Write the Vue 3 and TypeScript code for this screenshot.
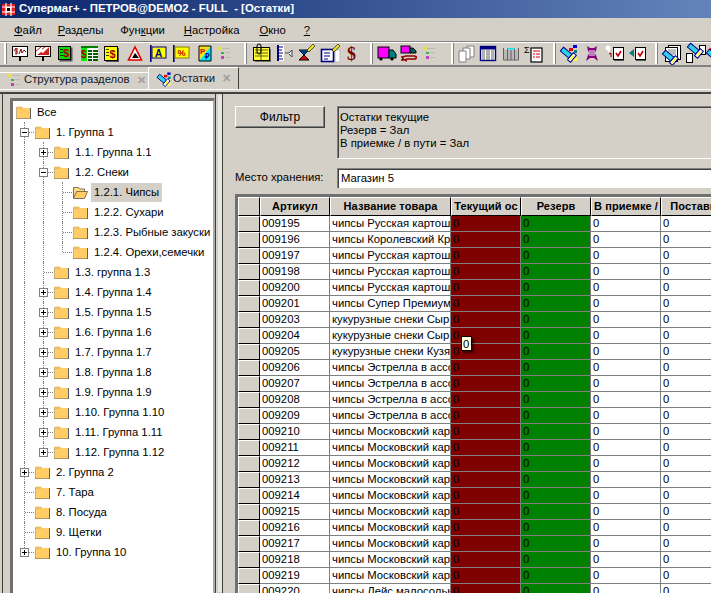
<script setup lang="ts">
type Cell = 'v' | 't' | 'l' | 'n'
interface TreeRow { cells: Cell[]; text: string; exp?: '+' | '-'; open?: boolean }

const menu = [
  { pre: '', u: 'Ф', post: 'айл' },
  { pre: '', u: 'Р', post: 'азделы' },
  { pre: 'Фун', u: 'к', post: 'ции' },
  { pre: '', u: 'Н', post: 'астройка' },
  { pre: '', u: 'О', post: 'кно' },
  { pre: '', u: '?', post: '' },
]

const B = 'stroke="#000" stroke-width="1"'
const legend = `<rect x="2" y="5" width="4" height="3" fill="#e8e040"/><rect x="6" y="6" width="8" height="1" fill="#b8b8b8"/><rect x="5" y="10" width="3" height="2" fill="#40b040"/><rect x="9" y="10" width="5" height="1" fill="#b8b8b8"/><rect x="5" y="14" width="3" height="3" fill="#c040c0"/><rect x="9" y="15" width="5" height="1" fill="#b8b8b8"/>`
const torch = (x: number, y: number) => `<g transform="translate(${x} ${y}) rotate(40 7 6)"><rect x="0" y="3" width="11" height="5" fill="#30d0e8" stroke="#000080"/><rect x="11" y="1" width="4" height="9" fill="#fff" stroke="#000080"/><rect x="12" y="3" width="2" height="5" fill="#ffff40"/></g>`
const chk = (x: number) => `<rect x="${x + 1}" y="7" width="10" height="12" fill="#555"/><rect x="${x}.5" y="5.5" width="10" height="12" fill="#fff" stroke="#000"/><path d="M${x + 3} 11l2 3 3-5" fill="none" stroke="#c00000" stroke-width="1.6"/>`
const pen = (x: number, y: number) => `<path d="M${x} ${y + 6}l6-6 2 2-6 6z" fill="#e8e020" stroke="#000" stroke-width=".6"/>`

const groups: { cls: string; icons: string[] }[] = [
  {
    cls: 'g1', icons: [
      `<rect x="3.5" y="4.5" width="15" height="10" fill="#fff" ${B}/><rect x="10" y="15" width="2" height="4" fill="#000"/><path d="M5 9l2-3v7M8 6v6M10 12l2-5 1 4 2-3 2 2" fill="none" stroke="#900000"/>`,
      `<rect x="3.5" y="4.5" width="15" height="10" fill="#fff" ${B}/><rect x="10" y="15" width="2" height="4" fill="#000"/><path d="M5 13l4-3 2 1 6-6v8H5z" fill="#d02020"/><path d="M4 9l5-4M10 7l3-2" stroke="#b02020"/>`,
      `<rect x="4.5" y="5.5" width="13" height="14" fill="#555"/><rect x="3.5" y="4.5" width="12" height="13" fill="#00e000" ${B}/><rect x="5" y="7" width="3" height="1" fill="#004000"/><rect x="5" y="10" width="3" height="1" fill="#004000"/><rect x="5" y="13" width="3" height="1" fill="#004000"/><text x="8" y="15" font-size="11" font-weight="700" fill="#a00000" font-family="Liberation Sans">$</text>`,
      `<rect x="3" y="4" width="17" height="15" fill="#fff"/><rect x="3" y="4" width="17" height="2" fill="#008000"/><rect x="3" y="6" width="6" height="13" fill="#00f000"/><path d="M10 8h4v2h-4zM15 8h5v2h-5zM10 11h4v2h-4zM15 11h5v2h-5zM10 14h4v2h-4zM15 14h5v2h-5zM10 17h4v2h-4zM15 17h5v2h-5z" fill="#006000"/><text x="3" y="16" font-size="10" font-weight="700" fill="#a00000" font-family="Liberation Sans">$</text>`,
      `<rect x="5" y="6" width="13" height="14" fill="#555"/><rect x="3.5" y="4.5" width="13" height="14" fill="#ffff00" ${B}/><rect x="5" y="7" width="3" height="1" fill="#404000"/><rect x="5" y="10" width="3" height="1" fill="#404000"/><rect x="5" y="13" width="3" height="1" fill="#404000"/><text x="8.5" y="16" font-size="11" font-weight="700" fill="#a00000" font-family="Liberation Sans">$</text>`,
      `<path d="M11 5L4.500 18h13z" fill="#fff" stroke="#e00000" stroke-width="1.6"/><path d="M8 16l3-5 4 5z" fill="#000"/>`,
      `<rect x="3" y="3" width="1.6" height="17" fill="#000080"/><rect x="5" y="5" width="14" height="11" fill="#ffff00" stroke="#000080"/><text x="8" y="14.500" font-size="10" font-weight="700" fill="#000080" font-family="Liberation Sans">A</text>`,
      `<rect x="3" y="3" width="1.6" height="17" fill="#000080"/><rect x="5" y="5" width="14" height="11" fill="#ffff00" stroke="#808000"/><text x="7.500" y="14" font-size="9" font-weight="700" fill="#c00000" font-family="Liberation Sans">%</text>`,
      `<path d="M6 4h12v15H6z" fill="#00e8ff"/><path d="M6 4h12L6 19z" fill="#ffe020"/><path d="M6 4h12v15H6z" fill="none" stroke="#000"/><text x="7" y="12" font-size="8" fill="#c00000" font-weight="700" font-family="Liberation Sans">Р</text><text x="12" y="17" font-size="8" fill="#000080" font-weight="700" font-family="Liberation Sans">₽</text>`,
      legend,
    ],
  },
  {
    cls: 'g2', icons: [
      `<rect x="6" y="7" width="16" height="13" fill="#555" opacity=".8"/><rect x="4.500" y="5.500" width="16" height="13" fill="#ffff40" ${B}/><path d="M6 8h13M6 11h13M6 14h13M12 6v12" stroke="#606000"/><rect x="8" y="2" width="4" height="10" rx="2" fill="none" stroke="#000"/>`,
      `<rect x="5" y="3" width="2" height="16" fill="#000080"/><rect x="7" y="3" width="5" height="16" fill="#fff"/><path d="M7 5h4M7 8h3M7 11h4M7 14h3M7 17h4" stroke="#000080"/><path d="M13 11h4l3-3v7l-3-3" fill="#fff" stroke="#404040"/>`,
      `<path d="M4 8h10L9 13l5 5H4l5-5z" fill="#e00000" stroke="#000"/><path d="M4 8h10L9 13z" fill="#004080"/>${pen(12, 2)}`,
      `<rect x="17" y="8" width="5" height="12" fill="#fff" stroke="#bbb"/><rect x="3.500" y="7.500" width="12" height="12" fill="#fff" stroke="#000080" stroke-width="1.6"/><path d="M6 11h6M6 14h6M6 17h4" stroke="#000080"/>${pen(14, 2)}`,
      `<text x="6" y="18" font-size="18" font-weight="700" fill="#800000" font-family="Liberation Serif">$</text>`,
    ],
  },
  {
    cls: 'g3', icons: [
      `<rect x="3" y="5" width="11" height="11" fill="#ff00ff" stroke="#000"/><path d="M14 8h4l3 4v4h-7z" fill="#008080" stroke="#000"/><circle cx="6" cy="17" r="1.6" fill="#000"/><circle cx="17" cy="17" r="1.6" fill="#000"/>`,
      `<rect x="3" y="4" width="9" height="7" fill="#ff00ff" stroke="#000"/><path d="M12 6h3l3 3v2h-6z" fill="#006060" stroke="#000"/><path d="M3 18h3l-2-3 4-1h8c3 0 3 3 0 3H9c-2 0-2 2 0 2" fill="none" stroke="#900000" stroke-width="1.6"/>`,
      legend,
    ],
  },
  {
    cls: 'g4', icons: [
      `<path d="M13 4h7v11h-7z" fill="#fff" stroke="#808080"/><path d="M9 6h7v11H9z" fill="#fff" stroke="#808080"/><path d="M5 9h7v11H5z" fill="#fff" stroke="#808080"/>`,
      `<rect x="3.500" y="4.500" width="15" height="14" fill="#fff" stroke="#000080" stroke-width="1.400"/><rect x="4" y="5" width="14" height="2.500" fill="#000080"/><path d="M5 9h3M9 9h4M14 9h3M5 11h3M9 11h4M14 11h3M5 13h3M9 13h4M14 13h3M5 15h3M9 15h4M14 15h3M5 17h3M9 17h4M14 17h3" stroke="#606060"/>`,
      `<rect x="3" y="8" width="16" height="9" fill="#b8b8b8"/><rect x="7" y="6" width="8" height="1.400" fill="#00e8ff"/><path d="M3.500 6v12h15V6M7.500 7v11M11 8v10M14.500 7v11" fill="none" stroke="#606060"/>`,
      `<text x="1" y="11" font-size="9" fill="#000" font-family="Liberation Sans">Σ</text><rect x="8" y="6" width="11" height="14" fill="#fff" stroke="#000" stroke-width="1.200"/><path d="M10 9h7M10 12h2M13 12h4M10 15h2M13 15h4" stroke="#e00000"/>`,
    ],
  },
  {
    cls: 'g5', icons: [
      `<path d="M13 19l6-4v4z" fill="#ffff40"/>${torch(2, 6)}<rect x="11" y="6" width="4" height="3" fill="#e00000"/><rect x="15" y="3" width="4" height="3" fill="#0000e0"/><rect x="16" y="8" width="3" height="3" fill="#008080"/>`,
      `<path d="M6 4l3 2h4l3-2-1 5-2 2 2 2 2 6-4-3h-4l-4 3 2-6 2-2-2-2z" fill="#800080"/><rect x="8" y="8" width="6" height="6" fill="#c080c0"/>`,
      `<circle cx="4" cy="6" r="2.500" fill="#fff"/><circle cx="5" cy="9" r="1.200" fill="#fff"/>${chk(9)}<path d="M5 12l2-1v4" stroke="#800000" fill="none"/>`,
      `<path d="M7 7v8l-5-4z" fill="#008080"/>${chk(8)}`,
    ],
  },
  {
    cls: 'g6', icons: [
      `<rect x="8.500" y="3.500" width="12" height="14" fill="#fff" stroke="#000"/><rect x="5.500" y="5.500" width="12" height="14" fill="#fff" stroke="#000"/><path d="M8 8h8M8 10h8M8 12h8" stroke="#808080"/>${torch(2, 9)}`,
      `<rect x="16.500" y="3.500" width="6" height="9" fill="#fff" stroke="#000"/><rect x="3.500" y="11.500" width="6" height="9" fill="#fff" stroke="#000"/>${torch(4, 2)}`,
      `<path d="M2 8l5-4 5 4z" fill="#e00000"/>${torch(0, 8)}`,
    ],
  },
]

const row = (cells: Cell[], text: string, exp?: '+' | '-', open?: boolean): TreeRow => ({ cells, text, exp, open })
const tree: TreeRow[] = [
  row([], 'Все'),
  row(['t'], '1. Группа 1', '-'),
  row(['v', 't'], '1.1. Группа 1.1', '+'),
  row(['v', 't'], '1.2. Снеки', '-'),
  row(['v', 'v', 't'], '1.2.1. Чипсы', undefined, true),
  row(['v', 'v', 't'], '1.2.2. Сухари'),
  row(['v', 'v', 't'], '1.2.3. Рыбные закуски'),
  row(['v', 'v', 'l'], '1.2.4. Орехи,семечки'),
  row(['v', 't'], '1.3. группа 1.3'),
  ...[4, 5, 6, 7, 8, 9, 10, 11].map(n => row(['v', 't'], `1.${n}. Группа 1.${n}`, '+')),
  row(['v', 'l'], '1.12. Группа 1.12', '+'),
  row(['t'], '2. Группа 2', '+'),
  row(['t'], '7. Тара'),
  row(['t'], '8. Посуда'),
  row(['t'], '9. Щетки'),
  row(['l'], '10. Группа 10', '+'),
]

const R = 'чипсы Русская картошка'
const E = 'чипсы Эстрелла в ассорти'
const M = 'чипсы Московский картофель'
const goods: [string, string][] = [
  ['009195', R], ['009196', 'чипсы Королевский Краб'], ['009197', R], ['009198', R], ['009200', R],
  ['009201', 'чипсы Супер Премиум'], ['009203', 'кукурузные снеки Сыр'], ['009204', 'кукурузные снеки Сыр'],
  ['009205', 'кукурузные снеки Кузя'], ['009206', E], ['009207', E], ['009208', E], ['009209', E],
  ['009210', M], ['009211', M], ['009212', M], ['009213', M], ['009214', M], ['009215', M], ['009216', M],
  ['009217', M], ['009218', M], ['009219', M], ['009220', 'чипсы Лейс малосольные'],
]
const headers = ['Артикул', 'Название товара', 'Текущий ос', 'Резерв', 'В приемке /', 'Поставка']
</script>

<template>
  <div class="app">
    <div class="title">
      <svg class="logo" width="15" height="15" viewBox="0 0 15 15">
        <rect x="1" y="2" width="13" height="11" fill="#e02020" />
        <path d="M1 5h13M1 10h13M5 1v13M10 1v13" stroke="#fff" stroke-width="1.2" fill="none" />
        <rect x="5.500" y="5.500" width="4" height="4" fill="#000" stroke="#fff" />
      </svg>
      <span>Супермаг+ - ПЕТРОВ@DEMO2 - FULL&nbsp; - [Остатки]</span>
    </div>

    <div class="menu">
      <span v-for="m in menu" :key="m.u" class="menu-item">{{ m.pre }}<u>{{ m.u }}</u>{{ m.post }}</span>
    </div>

    <div class="toolbar">
      <template v-for="g in groups" :key="g.cls">
        <i class="grip" :class="g.cls"></i>
        <svg v-for="(ic, n) in g.icons" :key="n" class="tool" width="23" height="23" viewBox="0 0 23 23" v-html="ic"></svg>
      </template>
    </div>

    <div class="tabs">
      <div class="tab">
        <svg width="16" height="16" viewBox="0 3 16 16" class="tab-ic" v-html="legend"></svg>
        <span class="tab-text">Структура разделов</span>
        <span class="tab-x">✕</span>
      </div>
      <div class="tab active">
        <svg width="18" height="18" viewBox="0 0 22 22" class="tab-ic" v-html="groups[4].icons[0]"></svg>
        <span class="tab-text">Остатки</span>
        <span class="tab-x">✕</span>
      </div>
    </div>

    <div class="main">
      <aside class="side">
        <div class="tree">
          <div v-for="r in tree" :key="r.text" class="node">
            <span v-for="(c, i) in r.cells" :key="i" class="guide" :class="c">
              <b v-if="i === r.cells.length - 1 && r.exp" class="exp" :class="{ minus: r.exp === '-' }"></b>
            </span>
            <svg class="folder" :class="{ root: !r.cells.length }" width="15" height="13" viewBox="0 0 15 13">
              <template v-if="r.open">
                <path d="M.5 12.500V1.500h5l1 1.500h5v2" fill="#ffdd88" stroke="#807050" />
                <path d="M.5 12.500l3-7h11l-3 7z" fill="#ffcc66" stroke="#807050" />
              </template>
              <template v-else>
                <path d="M0 1.500L1 .5h5l1 1.500h7v11H0z" fill="#ffcc66" />
                <path d="M0 2h6.500" stroke="#c8b080" fill="none" />
                <path d="M.5 12.500v-10.500" stroke="#c8b080" fill="none" />
                <path d="M14.500 2v11H0" stroke="#606060" fill="none" />
              </template>
            </svg>
            <span class="label" :class="{ sel: r.open }">{{ r.text }}</span>
          </div>
        </div>
      </aside>

      <section class="content">
        <div class="top">
          <button class="filter">Фильтр</button>
          <div class="memo">Остатки текущие<br />Резерв = Зал<br />В приемке / в пути = Зал</div>
        </div>
        <div class="place">
          <label>Место хранения:</label>
          <div class="input">Магазин 5</div>
        </div>
        <div class="grid">
          <div class="gr head">
            <div class="ind"></div>
            <div v-for="h in headers" :key="h" class="th">{{ h }}</div>
          </div>
          <div v-for="g in goods" :key="g[0]" class="gr">
            <div class="ind"></div>
            <div class="td">{{ g[0] }}</div>
            <div class="td">{{ g[1] }}</div>
            <div class="td red">0</div>
            <div class="td green">0</div>
            <div class="td">0</div>
            <div class="td">0</div>
          </div>
          <div class="hint">0</div>
        </div>
      </section>
    </div>
  </div>
</template>

<style>
html, body { margin: 0; overflow: hidden; background: #d4d0c8; }
</style>

<style scoped>
.app {
  width: 711px;
  height: 593px;
  overflow: hidden;
  background: #d4d0c8;
  font: 11.3px/1 "Liberation Sans", Arial, sans-serif;
  color: #000;
  display: flex;
  flex-direction: column;
}
.title {
  height: 18px;
  flex: none;
  display: flex;
  align-items: center;
  gap: 3px;
  padding-left: 1px;
  background: linear-gradient(90deg, #0a246a 0%, #6384bb 100%);
  color: #fff;
  font-weight: 700;
  font-size: 11.4px;
  white-space: pre;
}
.menu {
  height: 21px;
  padding-top: 2px;
  flex: none;
  display: flex;
  align-items: center;
  padding-left: 14px;
  gap: 16px;
}
.menu-item { white-space: nowrap; }
.menu-item:nth-child(3) { margin-left: 1px; }
.menu-item:nth-child(4) { margin-left: 3px; }
.menu-item:nth-child(5) { margin-left: 4px; }
.menu-item:nth-child(6) { margin-left: 2px; }
.toolbar {
  height: 23px;
  flex: none;
  display: flex;
  padding: 0 0 0 4px;
  border-top: 1px solid #808080;
  border-bottom: 2px solid #808080;
  box-shadow: inset 0 1px 0 #fff;
  overflow: hidden;
  box-sizing: content-box;
}
.tool { flex: none; display: block; }
.grip {
  flex: none;
  width: 2px;
  height: 21px;
  margin: 1px 2px 0 0;
  background: #fff;
  border-right: 1px solid #808080;
}
.g2 { margin-left: 5px; }
.g3 { margin-left: 6px; }
.g4 { margin-left: 7px; margin-right: 0; }
.g5 { margin-left: 7px; }
.g6 { margin-left: 5px; }
.tabs {
  height: 22px;
  flex: none;
  display: flex;
  align-items: flex-end;
  border-bottom: 1px solid #fff;
  white-space: nowrap;
}
.tab {
  height: 17px;
  width: 148px;
  box-sizing: border-box;
  display: flex;
  align-items: center;
  padding: 0 0 2px 6px;
  border-top: 1px solid #fff;
  color: #10182a;
}
.tab-ic { flex: none; }
.tab-text { margin-left: 2px; }
.tab-x { color: #a0a0a0; font-size: 11px; font-weight: 700; margin-left: 7px; }
.tab.active {
  height: 22px;
  width: 91px;
  padding: 0 0 0 6px;
  border-left: 1px solid #fff;
  border-right: 1px solid #404040;
}
.tab.active .tab-text { margin-left: 0; }
.main {
  flex: 1;
  min-height: 0;
  display: flex;
  border-top: 2px solid #404040;
  margin-top: 2px;
}
.side {
  width: 214px;
  flex: none;
  margin-left: 2px;
  border-left: 1px solid #404040;
  box-sizing: border-box;
  padding: 4px 0 0 7px;
  border-right: 1px solid #404040;
}
.tree {
  height: 100%;
  background: #fff;
  border-top: 3px solid #707070;
  border-left: 3px solid #707070;
  border-right: 2px solid #a8a8a8;
  padding: 1px 0 0 2px;
  box-sizing: border-box;
}
.node {
  height: 20px;
  display: flex;
  align-items: center;
  white-space: nowrap;
}
.guide {
  flex: none;
  width: 19px;
  height: 20px;
  position: relative;
  display: block;
}
.guide.v::before, .guide.t::before, .guide.l::before {
  content: "";
  position: absolute;
  left: 9px;
  top: 0;
  height: 20px;
  border-left: 1px dotted #808080;
}
.guide.l::before { height: 10px; }
.guide.t::after, .guide.l::after {
  content: "";
  position: absolute;
  left: 10px;
  top: 10px;
  width: 9px;
  border-top: 1px dotted #808080;
}
.exp {
  position: absolute;
  left: 5px;
  top: 6px;
  width: 9px;
  height: 9px;
  box-sizing: border-box;
  border: 1px solid #808080;
  background:
    linear-gradient(#000, #000) center / 5px 1px no-repeat,
    linear-gradient(#000, #000) center / 1px 5px no-repeat,
    #fff;
  z-index: 1;
}
.exp.minus {
  background: linear-gradient(#000, #000) center / 5px 1px no-repeat, #fff;
}
.folder { flex: none; margin-left: 1px; display: block; }
.label {
  margin-left: 3px;
  padding: 3px 3px;
  line-height: 13px;
  font-size: 11.3px;
}
.label.sel { background: #d4d0c8; }
.content {
  flex: 1;
  min-width: 0;
  margin-left: 6px;
  border-left: 1px solid #404040;
  padding: 12px 0 0 12px;
  box-shadow: -5px 0 0 -1px #e8e6e0;
}
.top { display: flex; height: 53px; }
.filter {
  width: 90px;
  height: 22px;
  flex: none;
  padding: 0;
  background: #d4d0c8;
  font: inherit;
  font-size: 12px;
  border: 1px solid;
  border-color: #fff #404040 #404040 #fff;
  box-shadow: inset -1px -1px 0 #808080;
}
.memo {
  flex: 1;
  margin-left: 12px;
  margin-right: -4px;
  box-sizing: border-box;
  padding: 4px 0 0 2px;
  line-height: 13px;
  border: 1px solid;
  border-color: #808080 #fff #fff #808080;
  box-shadow: inset 1px 1px 0 #404040;
}
.place {
  display: flex;
  align-items: center;
  height: 20px;
  margin-top: 9px;
}
.place label { width: 102px; flex: none; box-sizing: border-box; }
.input {
  flex: 1;
  height: 100%;
  margin-right: -4px;
  box-sizing: border-box;
  background: #fff;
  border-top: 1px solid #808080;
  border-left: 1px solid #808080;
  box-shadow: inset 1px 1px 0 #404040;
  padding: 4px 0 0 3px;
}
.grid {
  position: relative;
  margin-top: 6px;
  margin-right: -200px;
  border-top: 3px solid #707070;
  border-left: 3px solid #707070;
}
.gr {
  display: grid;
  grid-template-columns: 22px 70px 121px 70px 70px 70px 70px;
  height: 16px;
}
.gr.head { height: 19px; }
.ind {
  background: #d4d0c8;
  border-top: 1px solid #fff;
  border-left: 1px solid #fff;
  border-right: 1px solid #000;
  border-bottom: 1px solid #000;
  box-sizing: border-box;
}
.th {
  box-sizing: border-box;
  background: #d4d0c8;
  font-weight: 700;
  font-size: 11px;
  letter-spacing: .1px;
  text-align: center;
  line-height: 17px;
  white-space: nowrap;
  overflow: hidden;
  border-top: 1px solid #fff;
  border-left: 1px solid #fff;
  border-right: 1px solid #000;
  border-bottom: 1px solid #000;
}
.td {
  box-sizing: border-box;
  background: #fff;
  padding: 0 0 0 2px;
  line-height: 14px;
  white-space: nowrap;
  overflow: hidden;
  border-right: 1px solid #808080;
  border-bottom: 1px solid #808080;
}
.td.red { background: #800000; }
.td.green { background: #008000; }
.hint {
  position: absolute;
  left: 223px;
  top: 139px;
  width: 11px;
  height: 15px;
  box-sizing: border-box;
  padding: 1px 0 0 1px;
  line-height: 12px;
  background: #ffffe1;
  border: 1px solid #000;
  box-shadow: 2px 2px 2px rgba(0, 0, 0, .5);
}
</style>
